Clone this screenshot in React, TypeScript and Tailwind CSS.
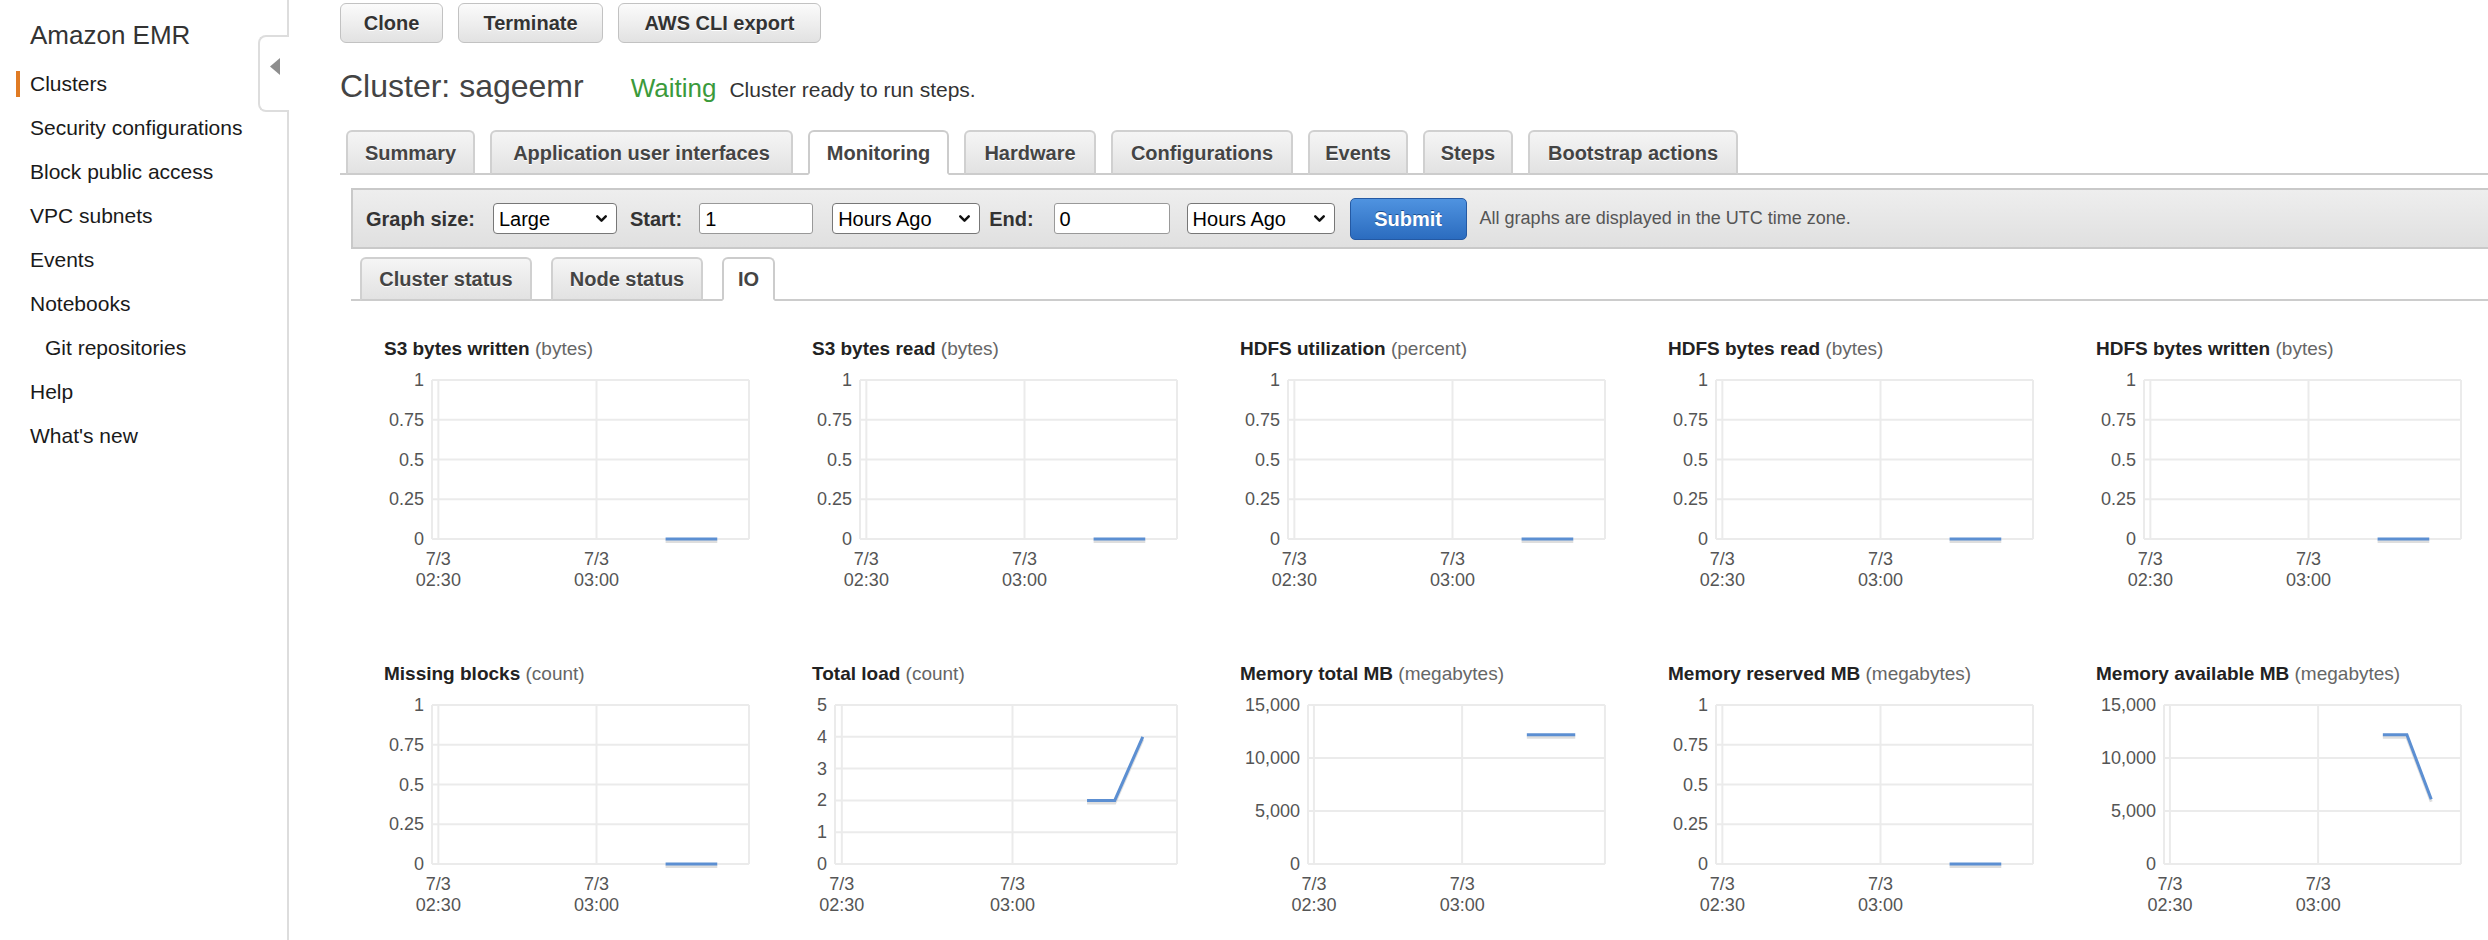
import React from 'react';
import { ChevronDown } from 'lucide-react';

type Chart = { title: string; unit: string; ticks: string[]; max: number; values: number[] };

const charts: Chart[] = [
  { title: 'S3 bytes written', unit: 'bytes', ticks: ['1', '0.75', '0.5', '0.25', '0'], max: 1, values: [0, 0, 0] },
  { title: 'S3 bytes read', unit: 'bytes', ticks: ['1', '0.75', '0.5', '0.25', '0'], max: 1, values: [0, 0, 0] },
  { title: 'HDFS utilization', unit: 'percent', ticks: ['1', '0.75', '0.5', '0.25', '0'], max: 1, values: [0, 0, 0] },
  { title: 'HDFS bytes read', unit: 'bytes', ticks: ['1', '0.75', '0.5', '0.25', '0'], max: 1, values: [0, 0, 0] },
  { title: 'HDFS bytes written', unit: 'bytes', ticks: ['1', '0.75', '0.5', '0.25', '0'], max: 1, values: [0, 0, 0] },
  { title: 'Missing blocks', unit: 'count', ticks: ['1', '0.75', '0.5', '0.25', '0'], max: 1, values: [0, 0, 0] },
  { title: 'Total load', unit: 'count', ticks: ['5', '4', '3', '2', '1', '0'], max: 5, values: [2, 2, 4] },
  { title: 'Memory total MB', unit: 'megabytes', ticks: ['15,000', '10,000', '5,000', '0'], max: 15000, values: [12200, 12200, 12200] },
  { title: 'Memory reserved MB', unit: 'megabytes', ticks: ['1', '0.75', '0.5', '0.25', '0'], max: 1, values: [0, 0, 0] },
  { title: 'Memory available MB', unit: 'megabytes', ticks: ['15,000', '10,000', '5,000', '0'], max: 15000, values: [12200, 12200, 6100] },
];

const H = 159;
const XS = [737, 818, 900];

function ChartBox({ c }: { c: Chart }) {
  const n = c.ticks.length;
  const gy = c.ticks.map((_, i) => (i * H) / (n - 1));
  const pts = c.values.map((v, i) => `${XS[i]},${(H - (v / c.max) * H).toFixed(1)}`).join(' ');
  const shadow = c.values.map((v, i) => `${XS[i]},${(H - (v / c.max) * H + 2.5).toFixed(1)}`).join(' ');
  return (
    <div className="h-[325px] w-[428px]">
      <div className="whitespace-nowrap text-[19px] leading-none">
        <span className="font-bold text-[#222]">{c.title}</span>{' '}
        <span className="text-[#666]">({c.unit})</span>
      </div>
      <div className="mt-[22px] flex w-[365px] items-start pl-[5px]">
        <div className="-mt-[10px] flex h-[179px] flex-col justify-between text-right text-[18px] leading-[20px] text-[#555]">
          {c.ticks.map((t) => (
            <div key={t}>{t}</div>
          ))}
        </div>
        <div className="ml-[8px] flex-1">
          <svg className="block h-[159px] w-full overflow-visible" viewBox={`0 0 1000 ${H}`} preserveAspectRatio="none">
            {gy.map((y) => (
              <line key={y} x1={0} x2={1000} y1={y} y2={y} stroke="#ebebeb" strokeWidth={2} vectorEffect="non-scaling-stroke" />
            ))}
            {[0, 20, 519, 1000].map((x) => (
              <line key={x} x1={x} x2={x} y1={0} y2={H} stroke="#ebebeb" strokeWidth={2} vectorEffect="non-scaling-stroke" />
            ))}
            <polyline points={shadow} fill="none" stroke="#c8c8c8" strokeOpacity={0.6} strokeWidth={3} vectorEffect="non-scaling-stroke" />
            <polyline points={pts} fill="none" stroke="#5c8fd2" strokeWidth={3} vectorEffect="non-scaling-stroke" />
          </svg>
          <div className="relative mt-[10px] h-[42px] text-[18px] leading-[21px] text-[#555]">
            <div className="absolute left-[2%] top-0 -translate-x-1/2 text-center">
              <div>7/3</div>
              <div>02:30</div>
            </div>
            <div className="absolute left-[51.9%] top-0 -translate-x-1/2 text-center">
              <div>7/3</div>
              <div>03:00</div>
            </div>
          </div>
        </div>
      </div>
    </div>
  );
}

function Select({ value, w }: { value: string; w: string }) {
  return (
    <div className={`flex h-[31px] items-center justify-between rounded-[4px] border border-[#777] bg-white pl-[5px] pr-[6px] text-[20px] text-black ${w}`}>
      <span>{value}</span>
      <ChevronDown size={17} strokeWidth={3.5} color="#111" />
    </div>
  );
}

function Input({ value, w }: { value: string; w: string }) {
  return (
    <div className={`flex h-[31px] items-center rounded-[3px] border border-[#999] bg-white pl-[5px] text-[20px] text-black ${w}`}>
      {value}
    </div>
  );
}

const mainTabs: { label: string; w: string; active?: boolean }[] = [
  { label: 'Summary', w: 'w-[129px]' },
  { label: 'Application user interfaces', w: 'w-[303px]' },
  { label: 'Monitoring', w: 'w-[141px]', active: true },
  { label: 'Hardware', w: 'w-[132px]' },
  { label: 'Configurations', w: 'w-[182px]' },
  { label: 'Events', w: 'w-[100px]' },
  { label: 'Steps', w: 'w-[90px]' },
  { label: 'Bootstrap actions', w: 'w-[210px]' },
];

const subTabs: { label: string; w: string; active?: boolean }[] = [
  { label: 'Cluster status', w: 'w-[172px]' },
  { label: 'Node status', w: 'w-[152px]' },
  { label: 'IO', w: 'w-[53px]', active: true },
];

const navItems = [
  { label: 'Clusters', active: true },
  { label: 'Security configurations' },
  { label: 'Block public access' },
  { label: 'VPC subnets' },
  { label: 'Events' },
  { label: 'Notebooks' },
  { label: 'Git repositories', sub: true },
  { label: 'Help' },
  { label: "What's new" },
];

export default function App() {
  return (
    <div className="flex h-[940px] w-[2488px] overflow-hidden bg-white font-['Liberation_Sans',Arial,sans-serif]">
      <aside className="relative w-[289px] shrink-0 border-r-2 border-[#dddddd]">
        <div className="pl-[30px] pt-[22px] text-[26px] leading-none text-[#333]">Amazon EMR</div>
        <nav className="mt-[14px]">
          {navItems.map((n) => (
            <div key={n.label} className="flex h-[44px] items-center text-[21px] text-[#1a1a1a]">
              {n.active ? (
                <>
                  <span className="ml-[16px] h-[26px] w-[4px] bg-[#e07b24]" />
                  <span className="ml-[10px]">{n.label}</span>
                </>
              ) : (
                <span className={n.sub ? 'ml-[45px]' : 'ml-[30px]'}>{n.label}</span>
              )}
            </div>
          ))}
        </nav>
        <div className="absolute -right-[2px] top-[35px] flex h-[77px] w-[31px] justify-center rounded-l-[8px] border-2 border-r-0 border-[#dddddd] bg-white pt-[21px]">
          <svg width="10" height="17" viewBox="0 0 10 17">
            <polygon points="10,0 10,17 0,8.5" fill="#8e8e8e" />
          </svg>
        </div>
      </aside>

      <main className="min-w-0 flex-1 pl-[51px]">
        <div className="mt-[3px] flex gap-[15px]">
          {[
            ['Clone', 'w-[103px]'],
            ['Terminate', 'w-[145px]'],
            ['AWS CLI export', 'w-[203px]'],
          ].map(([t, w]) => (
            <div
              key={t}
              className={`flex h-[40px] items-center justify-center rounded-[6px] border border-[#c2c2c2] bg-linear-to-b from-[#fbfbfb] to-[#e2e2e2] text-[20px] font-bold text-[#333] [text-shadow:0_1px_0_#fff] ${w}`}
            >
              {t}
            </div>
          ))}
        </div>

        <div className="mt-[27px] flex items-baseline leading-none">
          <span className="text-[32px] text-[#444]">Cluster: sageemr</span>
          <span className="ml-[47px] text-[26px] text-[#3b9a3b]">Waiting</span>
          <span className="ml-[13px] text-[21px] text-[#333]">Cluster ready to run steps.</span>
        </div>

        <div className="mt-[28px] flex items-end gap-[15px] border-b-2 border-[#cccccc] pl-[6px]">
          {mainTabs.map((t) => (
            <div
              key={t.label}
              className={`-mb-[2px] flex h-[45px] items-center justify-center rounded-t-[6px] border-2 text-[20px] font-bold text-[#444] [text-shadow:0_1px_0_#fff] ${t.w} ${
                t.active ? 'border-[#cccccc] border-b-white bg-white' : 'border-[#d0d0d0] border-b-[#cccccc] bg-linear-to-b from-[#f5f5f5] to-[#e2e2e2]'
              }`}
            >
              {t.label}
            </div>
          ))}
        </div>

        <div className="ml-[11px] mt-[13px] flex h-[61px] items-center border-2 border-r-0 border-[#c9c9c9] bg-linear-to-b from-[#eeeeee] to-[#e0e0e0] pl-[13px] text-[20px]">
          <span className="font-bold text-[#333]">Graph size:</span>
          <div className="ml-[18px]">
            <Select value="Large" w="w-[124px]" />
          </div>
          <span className="ml-[13px] font-bold text-[#333]">Start:</span>
          <div className="ml-[17px]">
            <Input value="1" w="w-[114px]" />
          </div>
          <div className="ml-[19px]">
            <Select value="Hours Ago" w="w-[148px]" />
          </div>
          <span className="ml-[9px] font-bold text-[#333]">End:</span>
          <div className="ml-[20px]">
            <Input value="0" w="w-[116px]" />
          </div>
          <div className="ml-[17px]">
            <Select value="Hours Ago" w="w-[148px]" />
          </div>
          <div className="ml-[15px] flex h-[42px] w-[117px] items-center justify-center rounded-[5px] border border-[#2459a3] bg-linear-to-b from-[#4f93e0] to-[#2b6cbf] font-bold text-white [text-shadow:0_-1px_0_#1f4f8f]">
            Submit
          </div>
          <span className="ml-[13px] text-[18px] text-[#555]">All graphs are displayed in the UTC time zone.</span>
        </div>

        <div className="ml-[11px] mt-[8px] flex items-end gap-[19px] border-b-2 border-[#cccccc] pl-[9px]">
          {subTabs.map((t) => (
            <div
              key={t.label}
              className={`-mb-[2px] flex h-[44px] items-center justify-center rounded-t-[6px] border-2 text-[20px] font-bold text-[#444] [text-shadow:0_1px_0_#fff] ${t.w} ${
                t.active ? 'border-[#cccccc] border-b-white bg-white' : 'border-[#d0d0d0] border-b-[#cccccc] bg-linear-to-b from-[#f5f5f5] to-[#e2e2e2]'
              }`}
            >
              {t.label}
            </div>
          ))}
        </div>

        <div className="mt-[38px] grid grid-cols-[repeat(5,428px)] pl-[44px]">
          {charts.map((c) => (
            <ChartBox key={c.title} c={c} />
          ))}
        </div>
      </main>
    </div>
  );
}
